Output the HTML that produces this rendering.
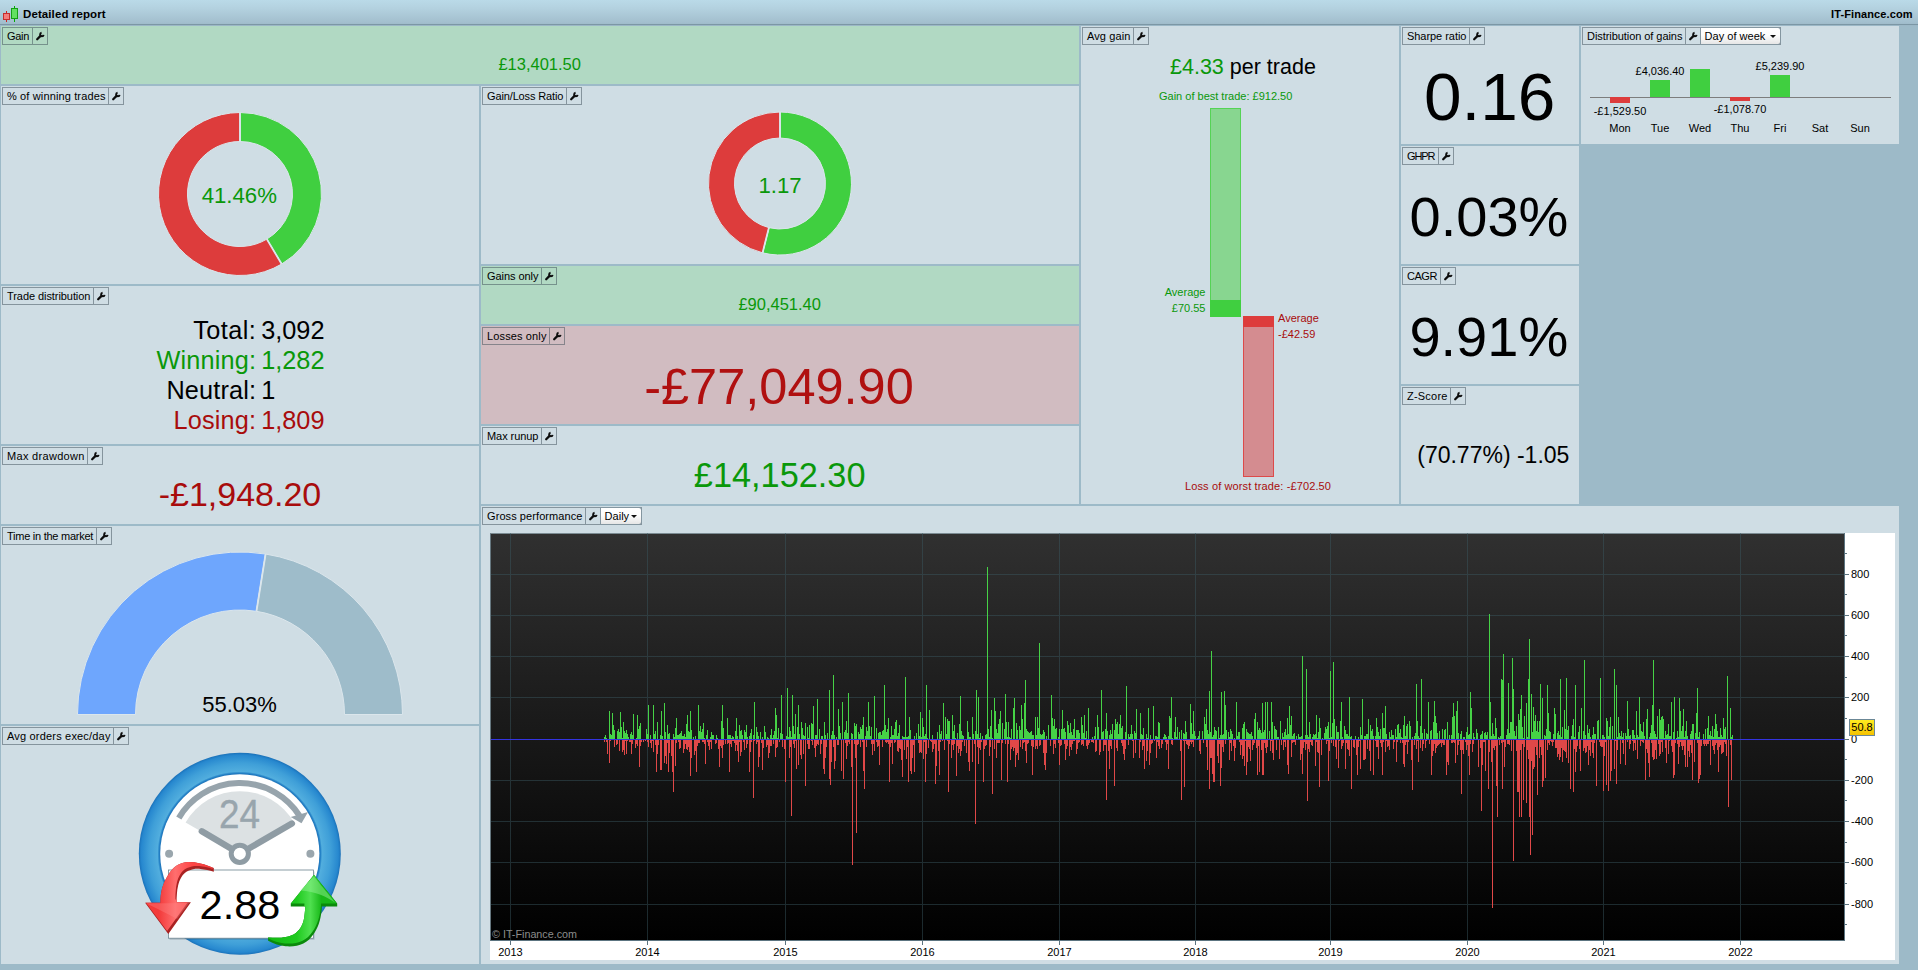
<!DOCTYPE html>
<html lang="en"><head><meta charset="utf-8"><title>Detailed report</title>
<style>
html,body{margin:0;padding:0}
body{width:1918px;height:970px;overflow:hidden;background:#9dbac8;font-family:"Liberation Sans",Arial,sans-serif;font-size:11px;color:#000;position:relative;line-height:1}
.p{position:absolute;overflow:hidden}
.t{position:absolute;white-space:nowrap;line-height:1}
.c{transform:translateX(-50%)}
.r{transform:translateX(-100%)}
.lb{position:absolute;height:16px;border:1px solid rgba(60,75,85,.5);display:flex;white-space:nowrap;font-size:11px;line-height:16px}
.lt{display:block;padding-left:4px;box-sizing:border-box;height:16px}
.lw{display:block;width:14px;height:16px;border-left:1px solid rgba(60,75,85,.5);position:relative}
.wr{position:absolute;left:3.2px;top:3.8px}
.dd{display:block;height:18px;margin:-1px -1px -1px 0;box-sizing:border-box;border:1px solid #8496a0;border-radius:0 3px 3px 0;background:linear-gradient(#ffffff,#fdfdfd 45%,#e6e6e6);padding-left:3.6px;line-height:16px;position:relative}
.dd i{position:absolute;right:4px;top:7px;border:3px solid transparent;border-top:3px solid #111;border-bottom:0;width:0;height:0}
svg{position:absolute;overflow:visible}
</style></head><body>

<div class="p" style="left:0;top:0;width:1918px;height:26px;background:linear-gradient(#badae8 0,#b4d2e0 30%,#a3bfce 85%,#9fbbca 24px,#7c97a5 24px,#7c97a5 25px,#9bb7c6 25px)"></div>
<svg style="left:3px;top:5px" width="16" height="18" viewBox="0 0 16 18"><path d="M3.5 6v11M11.5 1v16" stroke="#c22" stroke-width="1" fill="none"/><path d="M11.5 1v16" stroke="#0a0" stroke-width="1" fill="none"/><rect x="0.5" y="8.5" width="6" height="6" fill="#f47c7c" stroke="#c62c2c"/><rect x="8.5" y="3.5" width="6" height="10" fill="#62e062" stroke="#14a014"/></svg>
<div class="t" style="left:23px;top:9px;font-weight:bold;font-size:11.5px;letter-spacing:.1px">Detailed report</div>
<div class="t" style="left:1831px;top:9px;font-weight:bold;font-size:11px;letter-spacing:.12px">IT-Finance.com</div>
<div class="p" style="left:1px;top:26px;width:1078px;height:58px;background:#b1d9c3"></div>
<div class="p" style="left:1px;top:86px;width:478px;height:198px;background:#cfdde4"></div>
<div class="p" style="left:1px;top:286px;width:478px;height:158px;background:#cfdde4"></div>
<div class="p" style="left:1px;top:446px;width:478px;height:78px;background:#cfdde4"></div>
<div class="p" style="left:1px;top:526px;width:478px;height:198px;background:#cfdde4"></div>
<div class="p" style="left:1px;top:726px;width:478px;height:238px;background:#cfdde4"></div>
<div class="p" style="left:481px;top:86px;width:598px;height:178px;background:#cfdde4"></div>
<div class="p" style="left:481px;top:266px;width:598px;height:58px;background:#b1d9c3"></div>
<div class="p" style="left:481px;top:326px;width:598px;height:98px;background:#d1bcc1"></div>
<div class="p" style="left:481px;top:426px;width:598px;height:78px;background:#cfdde4"></div>
<div class="p" style="left:1081px;top:26px;width:318px;height:478px;background:#cfdde4"></div>
<div class="p" style="left:1401px;top:26px;width:178px;height:118px;background:#cfdde4"></div>
<div class="p" style="left:1401px;top:146px;width:178px;height:118px;background:#cfdde4"></div>
<div class="p" style="left:1401px;top:266px;width:178px;height:118px;background:#cfdde4"></div>
<div class="p" style="left:1401px;top:386px;width:178px;height:118px;background:#cfdde4"></div>
<div class="p" style="left:1581px;top:26px;width:318px;height:118px;background:#cfdde4"></div>
<div class="p" style="left:481px;top:506px;width:1418px;height:458px;background:#cfdde4"></div>
<div class="lb" style="left:2px;top:27px"><span class="lt" style="width:29px;letter-spacing:-0.278px">Gain</span><span class="lw"><svg class="wr" viewBox="0 0 10 10" width="8.4" height="8.4"><path d="M1.4 8.6L5.4 4.6" stroke="#0c0c0c" stroke-width="2.7" stroke-linecap="round" fill="none"/><path d="M9.07 3.36A2.1 2.1 0 1 1 6.64 0.93" stroke="#0c0c0c" stroke-width="2.3" fill="none"/></svg></span></div>
<div class="lb" style="left:2px;top:87px"><span class="lt" style="width:105px;letter-spacing:0.134px">% of winning trades</span><span class="lw"><svg class="wr" viewBox="0 0 10 10" width="8.4" height="8.4"><path d="M1.4 8.6L5.4 4.6" stroke="#0c0c0c" stroke-width="2.7" stroke-linecap="round" fill="none"/><path d="M9.07 3.36A2.1 2.1 0 1 1 6.64 0.93" stroke="#0c0c0c" stroke-width="2.3" fill="none"/></svg></span></div>
<div class="lb" style="left:2px;top:287px"><span class="lt" style="width:90px;letter-spacing:-0.069px">Trade distribution</span><span class="lw"><svg class="wr" viewBox="0 0 10 10" width="8.4" height="8.4"><path d="M1.4 8.6L5.4 4.6" stroke="#0c0c0c" stroke-width="2.7" stroke-linecap="round" fill="none"/><path d="M9.07 3.36A2.1 2.1 0 1 1 6.64 0.93" stroke="#0c0c0c" stroke-width="2.3" fill="none"/></svg></span></div>
<div class="lb" style="left:2px;top:447px"><span class="lt" style="width:84px;letter-spacing:0.312px">Max drawdown</span><span class="lw"><svg class="wr" viewBox="0 0 10 10" width="8.4" height="8.4"><path d="M1.4 8.6L5.4 4.6" stroke="#0c0c0c" stroke-width="2.7" stroke-linecap="round" fill="none"/><path d="M9.07 3.36A2.1 2.1 0 1 1 6.64 0.93" stroke="#0c0c0c" stroke-width="2.3" fill="none"/></svg></span></div>
<div class="lb" style="left:2px;top:527px"><span class="lt" style="width:93px;letter-spacing:-0.251px">Time in the market</span><span class="lw"><svg class="wr" viewBox="0 0 10 10" width="8.4" height="8.4"><path d="M1.4 8.6L5.4 4.6" stroke="#0c0c0c" stroke-width="2.7" stroke-linecap="round" fill="none"/><path d="M9.07 3.36A2.1 2.1 0 1 1 6.64 0.93" stroke="#0c0c0c" stroke-width="2.3" fill="none"/></svg></span></div>
<div class="lb" style="left:2px;top:727px"><span class="lt" style="width:110px;letter-spacing:0.185px">Avg orders exec/day</span><span class="lw"><svg class="wr" viewBox="0 0 10 10" width="8.4" height="8.4"><path d="M1.4 8.6L5.4 4.6" stroke="#0c0c0c" stroke-width="2.7" stroke-linecap="round" fill="none"/><path d="M9.07 3.36A2.1 2.1 0 1 1 6.64 0.93" stroke="#0c0c0c" stroke-width="2.3" fill="none"/></svg></span></div>
<div class="lb" style="left:482px;top:87px"><span class="lt" style="width:83px;letter-spacing:-0.133px">Gain/Loss Ratio</span><span class="lw"><svg class="wr" viewBox="0 0 10 10" width="8.4" height="8.4"><path d="M1.4 8.6L5.4 4.6" stroke="#0c0c0c" stroke-width="2.7" stroke-linecap="round" fill="none"/><path d="M9.07 3.36A2.1 2.1 0 1 1 6.64 0.93" stroke="#0c0c0c" stroke-width="2.3" fill="none"/></svg></span></div>
<div class="lb" style="left:482px;top:267px"><span class="lt" style="width:58px;letter-spacing:-0.063px">Gains only</span><span class="lw"><svg class="wr" viewBox="0 0 10 10" width="8.4" height="8.4"><path d="M1.4 8.6L5.4 4.6" stroke="#0c0c0c" stroke-width="2.7" stroke-linecap="round" fill="none"/><path d="M9.07 3.36A2.1 2.1 0 1 1 6.64 0.93" stroke="#0c0c0c" stroke-width="2.3" fill="none"/></svg></span></div>
<div class="lb" style="left:482px;top:327px"><span class="lt" style="width:66px;letter-spacing:0.131px">Losses only</span><span class="lw"><svg class="wr" viewBox="0 0 10 10" width="8.4" height="8.4"><path d="M1.4 8.6L5.4 4.6" stroke="#0c0c0c" stroke-width="2.7" stroke-linecap="round" fill="none"/><path d="M9.07 3.36A2.1 2.1 0 1 1 6.64 0.93" stroke="#0c0c0c" stroke-width="2.3" fill="none"/></svg></span></div>
<div class="lb" style="left:482px;top:427px"><span class="lt" style="width:58px;letter-spacing:-0.071px">Max runup</span><span class="lw"><svg class="wr" viewBox="0 0 10 10" width="8.4" height="8.4"><path d="M1.4 8.6L5.4 4.6" stroke="#0c0c0c" stroke-width="2.7" stroke-linecap="round" fill="none"/><path d="M9.07 3.36A2.1 2.1 0 1 1 6.64 0.93" stroke="#0c0c0c" stroke-width="2.3" fill="none"/></svg></span></div>
<div class="lb" style="left:1082px;top:27px"><span class="lt" style="width:50px;letter-spacing:0.113px">Avg gain</span><span class="lw"><svg class="wr" viewBox="0 0 10 10" width="8.4" height="8.4"><path d="M1.4 8.6L5.4 4.6" stroke="#0c0c0c" stroke-width="2.7" stroke-linecap="round" fill="none"/><path d="M9.07 3.36A2.1 2.1 0 1 1 6.64 0.93" stroke="#0c0c0c" stroke-width="2.3" fill="none"/></svg></span></div>
<div class="lb" style="left:1402px;top:27px"><span class="lt" style="width:66px;letter-spacing:-0.047px">Sharpe ratio</span><span class="lw"><svg class="wr" viewBox="0 0 10 10" width="8.4" height="8.4"><path d="M1.4 8.6L5.4 4.6" stroke="#0c0c0c" stroke-width="2.7" stroke-linecap="round" fill="none"/><path d="M9.07 3.36A2.1 2.1 0 1 1 6.64 0.93" stroke="#0c0c0c" stroke-width="2.3" fill="none"/></svg></span></div>
<div class="lb" style="left:1402px;top:147px"><span class="lt" style="width:35px;letter-spacing:-1.127px">GHPR</span><span class="lw"><svg class="wr" viewBox="0 0 10 10" width="8.4" height="8.4"><path d="M1.4 8.6L5.4 4.6" stroke="#0c0c0c" stroke-width="2.7" stroke-linecap="round" fill="none"/><path d="M9.07 3.36A2.1 2.1 0 1 1 6.64 0.93" stroke="#0c0c0c" stroke-width="2.3" fill="none"/></svg></span></div>
<div class="lb" style="left:1402px;top:267px"><span class="lt" style="width:37px;letter-spacing:-0.460px">CAGR</span><span class="lw"><svg class="wr" viewBox="0 0 10 10" width="8.4" height="8.4"><path d="M1.4 8.6L5.4 4.6" stroke="#0c0c0c" stroke-width="2.7" stroke-linecap="round" fill="none"/><path d="M9.07 3.36A2.1 2.1 0 1 1 6.64 0.93" stroke="#0c0c0c" stroke-width="2.3" fill="none"/></svg></span></div>
<div class="lb" style="left:1402px;top:387px"><span class="lt" style="width:47px;letter-spacing:0.214px">Z-Score</span><span class="lw"><svg class="wr" viewBox="0 0 10 10" width="8.4" height="8.4"><path d="M1.4 8.6L5.4 4.6" stroke="#0c0c0c" stroke-width="2.7" stroke-linecap="round" fill="none"/><path d="M9.07 3.36A2.1 2.1 0 1 1 6.64 0.93" stroke="#0c0c0c" stroke-width="2.3" fill="none"/></svg></span></div>
<div class="lb" style="left:1582px;top:27px"><span class="lt" style="width:102px;letter-spacing:-0.060px">Distribution of gains</span><span class="lw"><svg class="wr" viewBox="0 0 10 10" width="8.4" height="8.4"><path d="M1.4 8.6L5.4 4.6" stroke="#0c0c0c" stroke-width="2.7" stroke-linecap="round" fill="none"/><path d="M9.07 3.36A2.1 2.1 0 1 1 6.64 0.93" stroke="#0c0c0c" stroke-width="2.3" fill="none"/></svg></span><span class="dd" style="width:81px;letter-spacing:0.020px">Day of week<i></i></span></div>
<div class="lb" style="left:482px;top:507px"><span class="lt" style="width:102px;letter-spacing:0.079px">Gross performance</span><span class="lw"><svg class="wr" viewBox="0 0 10 10" width="8.4" height="8.4"><path d="M1.4 8.6L5.4 4.6" stroke="#0c0c0c" stroke-width="2.7" stroke-linecap="round" fill="none"/><path d="M9.07 3.36A2.1 2.1 0 1 1 6.64 0.93" stroke="#0c0c0c" stroke-width="2.3" fill="none"/></svg></span><span class="dd" style="width:42px;letter-spacing:0.020px">Daily<i></i></span></div>

<svg style="left:0;top:0" width="1918" height="970"><g stroke="#dbe6ec" stroke-width="1">
<path d="M240.00 112.50A81.5 81.5 0 0 1 281.66 264.05L266.84 239.12A52.5 52.5 0 0 0 240.00 141.50Z" fill="#40cf40"/><path d="M281.66 264.05A81.5 81.5 0 1 1 240.00 112.50L240.00 141.50A52.5 52.5 0 1 0 266.84 239.12Z" fill="#dd3c3c"/>
<path d="M240.00 141.50L240.00 112.50M266.84 239.12L281.66 264.05" stroke-width="1.8" fill="none"/>
<path d="M780.00 112.00A71.5 71.5 0 1 1 762.58 252.85L768.91 227.63A45.5 45.5 0 1 0 780.00 138.00Z" fill="#40cf40"/><path d="M762.58 252.85A71.5 71.5 0 0 1 780.00 112.00L780.00 138.00A45.5 45.5 0 0 0 768.91 227.63Z" fill="#dd3c3c"/>
<path d="M780.00 138.00L780.00 112.00M768.91 227.63L762.58 252.85" stroke-width="1.8" fill="none"/>
<path d="M77.50 714.50A162.5 162.5 0 0 1 265.57 554.02L256.44 611.30A104.5 104.5 0 0 0 135.50 714.50Z" fill="#6ea6fd"/><path d="M265.57 554.02A162.5 162.5 0 0 1 402.50 714.50L344.50 714.50A104.5 104.5 0 0 0 256.44 611.30Z" fill="#9ebcca"/>
<path d="M256.44 611.30L265.57 554.02" stroke-width="1.8" fill="none"/>
</g></svg>
















<div class="p" style="left:1210px;top:108px;width:31px;height:209px;box-sizing:border-box;border:1px solid #55d355;background:#88d690"></div>
<div class="p" style="left:1210px;top:300px;width:31px;height:17px;background:#40cf40"></div>
<div class="p" style="left:1243px;top:316px;width:31px;height:161px;box-sizing:border-box;border:1px solid #dd4a4a;background:#d48c90"></div>
<div class="p" style="left:1243px;top:316px;width:31px;height:11px;background:#dd3c3c"></div>









<div class="p" style="left:1590px;top:97px;width:301px;height:1px;background:#7d7d7d"></div>
<div class="p" style="left:1610px;top:97px;width:20px;height:6px;background:#dd3c3c"></div>
<div class="p" style="left:1650px;top:80px;width:20px;height:17px;background:#40cf40"></div>
<div class="p" style="left:1690px;top:69px;width:20px;height:28px;background:#40cf40"></div>
<div class="p" style="left:1730px;top:97px;width:20px;height:4px;background:#dd3c3c"></div>
<div class="p" style="left:1770px;top:75px;width:20px;height:22px;background:#40cf40"></div>











<div class="p" style="left:490px;top:533px;width:1405px;height:427px;background:#fff"></div>
<div class="p" style="left:490px;top:533px;width:1355px;height:408px;background:linear-gradient(#303030,#000);box-sizing:border-box;border-top:1px solid #7b8b92;border-left:1px solid #66777f"></div>
<svg style="left:0;top:0" width="1918" height="970" shape-rendering="crispEdges"><path d="M510.5 533V941M647.5 533V941M785.5 533V941M922.5 533V941M1059.5 533V941M1195.5 533V941M1330.5 533V941M1467.5 533V941M1603.5 533V941M1740.5 533V941M491 904.5H1845M491 862.5H1845M491 821.5H1845M491 780.5H1845M491 697.5H1845M491 656.5H1845M491 615.5H1845M491 574.5H1845" stroke="#3a5962" stroke-opacity=".46" stroke-width="1" fill="none"/><path d="M604.5 739v-2M605.5 739v-4M606.5 739v-1M609.5 739v-28M610.5 739v-5M611.5 739v-4M612.5 739v-26M613.5 739v-14M614.5 739v-9M617.5 739v-8M618.5 739v-10M619.5 739v-7M620.5 739v-27M621.5 739v-12M622.5 739v-1M623.5 739v-17M624.5 739v-8M625.5 739v-6M626.5 739v-9M627.5 739v-5M628.5 739v-2M630.5 739v-5M631.5 739v-7M632.5 739v-4M633.5 739v-25M636.5 739v-1M637.5 739v-24M638.5 739v-10M639.5 739v-13M640.5 739v-16M646.5 739v-10M647.5 739v-5M648.5 739v-34M650.5 739v-4M653.5 739v-34M654.5 739v-5M655.5 739v-8M657.5 739v-17M660.5 739v-4M661.5 739v-28M662.5 739v-3M664.5 739v-36M665.5 739v-7M667.5 739v-14M668.5 739v-5M669.5 739v-6M673.5 739v-5M674.5 739v-2M675.5 739v-11M676.5 739v-21M677.5 739v-4M678.5 739v-4M679.5 739v-5M680.5 739v-6M681.5 739v-8M682.5 739v-3M683.5 739v-3M684.5 739v-5M685.5 739v-2M686.5 739v-15M687.5 739v-24M688.5 739v-8M689.5 739v-7M690.5 739v-28M691.5 739v-9M693.5 739v-2M695.5 739v-3M698.5 739v-34M699.5 739v-8M700.5 739v-13M701.5 739v-7M702.5 739v-10M703.5 739v-16M704.5 739v-1M706.5 739v-4M707.5 739v-9M710.5 739v-2M711.5 739v-7M712.5 739v-4M713.5 739v-4M716.5 739v-4M717.5 739v-1M721.5 739v-18M722.5 739v-34M723.5 739v-11M727.5 739v-21M728.5 739v-4M729.5 739v-4M730.5 739v-4M731.5 739v-1M732.5 739v-3M733.5 739v-2M735.5 739v-8M736.5 739v-21M737.5 739v-3M739.5 739v-14M740.5 739v-8M741.5 739v-9M742.5 739v-4M744.5 739v-9M745.5 739v-7M746.5 739v-14M747.5 739v-2M749.5 739v-3M750.5 739v-6M751.5 739v-10M753.5 739v-4M754.5 739v-37M756.5 739v-12M757.5 739v-7M758.5 739v-3M760.5 739v-7M762.5 739v-2M764.5 739v-13M765.5 739v-7M767.5 739v-2M768.5 739v-1M770.5 739v-4M771.5 739v-10M772.5 739v-1M773.5 739v-4M774.5 739v-8M775.5 739v-31M776.5 739v-24M777.5 739v-1M778.5 739v-11M780.5 739v-6M781.5 739v-44M782.5 739v-5M786.5 739v-3M787.5 739v-51M788.5 739v-2M789.5 739v-12M790.5 739v-8M791.5 739v-2M792.5 739v-44M793.5 739v-13M794.5 739v-5M795.5 739v-25M797.5 739v-12M798.5 739v-34M799.5 739v-5M801.5 739v-17M802.5 739v-11M803.5 739v-4M804.5 739v-3M805.5 739v-16M807.5 739v-12M808.5 739v-1M809.5 739v-14M811.5 739v-16M812.5 739v-15M813.5 739v-33M815.5 739v-4M816.5 739v-4M817.5 739v-40M819.5 739v-10M821.5 739v-3M822.5 739v-3M824.5 739v-17M825.5 739v-4M827.5 739v-6M829.5 739v-49M831.5 739v-4M832.5 739v-8M833.5 739v-64M834.5 739v-4M836.5 739v-2M838.5 739v-30M839.5 739v-13M840.5 739v-6M842.5 739v-37M844.5 739v-7M845.5 739v-9M846.5 739v-18M847.5 739v-6M848.5 739v-46M851.5 739v-6M852.5 739v-5M854.5 739v-16M855.5 739v-13M856.5 739v-15M858.5 739v-7M859.5 739v-5M860.5 739v-12M861.5 739v-10M862.5 739v-14M863.5 739v-22M865.5 739v-3M866.5 739v-12M867.5 739v-8M868.5 739v-37M869.5 739v-13M870.5 739v-3M871.5 739v-12M874.5 739v-43M876.5 739v-11M878.5 739v-6M879.5 739v-7M880.5 739v-7M881.5 739v-4M882.5 739v-8M883.5 739v-9M884.5 739v-54M885.5 739v-14M886.5 739v-7M887.5 739v-10M888.5 739v-21M890.5 739v-2M891.5 739v-13M892.5 739v-4M893.5 739v-4M894.5 739v-10M895.5 739v-17M896.5 739v-19M897.5 739v-3M898.5 739v-6M899.5 739v-14M902.5 739v-3M903.5 739v-2M904.5 739v-2M905.5 739v-62M906.5 739v-2M907.5 739v-2M908.5 739v-3M909.5 739v-22M910.5 739v-9M914.5 739v-3M916.5 739v-6M918.5 739v-15M919.5 739v-3M920.5 739v-27M921.5 739v-2M922.5 739v-21M923.5 739v-12M924.5 739v-3M925.5 739v-5M926.5 739v-54M927.5 739v-1M929.5 739v-29M932.5 739v-4M937.5 739v-7M939.5 739v-14M940.5 739v-5M941.5 739v-8M943.5 739v-36M945.5 739v-22M946.5 739v-5M947.5 739v-20M948.5 739v-18M949.5 739v-18M952.5 739v-24M953.5 739v-8M954.5 739v-14M955.5 739v-1M957.5 739v-6M959.5 739v-15M960.5 739v-43M961.5 739v-8M962.5 739v-4M963.5 739v-3M967.5 739v-18M968.5 739v-7M969.5 739v-2M970.5 739v-2M972.5 739v-22M973.5 739v-5M975.5 739v-8M976.5 739v-49M977.5 739v-5M978.5 739v-42M979.5 739v-1M980.5 739v-6M982.5 739v-3M985.5 739v-4M986.5 739v-5M987.5 739v-172M988.5 739v-10M989.5 739v-2M990.5 739v-13M991.5 739v-29M992.5 739v-1M994.5 739v-41M995.5 739v-28M996.5 739v-10M997.5 739v-6M998.5 739v-15M999.5 739v-20M1000.5 739v-28M1002.5 739v-16M1004.5 739v-10M1005.5 739v-45M1006.5 739v-17M1007.5 739v-2M1008.5 739v-17M1009.5 739v-2M1010.5 739v-1M1011.5 739v-10M1013.5 739v-31M1014.5 739v-41M1016.5 739v-16M1017.5 739v-9M1019.5 739v-13M1020.5 739v-9M1021.5 739v-34M1022.5 739v-20M1023.5 739v-1M1024.5 739v-36M1025.5 739v-59M1026.5 739v-10M1027.5 739v-8M1028.5 739v-7M1029.5 739v-6M1030.5 739v-7M1031.5 739v-8M1032.5 739v-4M1033.5 739v-4M1035.5 739v-22M1036.5 739v-4M1037.5 739v-22M1038.5 739v-11M1039.5 739v-96M1040.5 739v-5M1041.5 739v-4M1042.5 739v-5M1043.5 739v-9M1044.5 739v-7M1046.5 739v-3M1048.5 739v-14M1051.5 739v-44M1052.5 739v-21M1053.5 739v-13M1054.5 739v-20M1055.5 739v-10M1056.5 739v-11M1058.5 739v-2M1059.5 739v-10M1061.5 739v-10M1062.5 739v-29M1063.5 739v-10M1064.5 739v-11M1065.5 739v-7M1067.5 739v-18M1068.5 739v-14M1069.5 739v-6M1070.5 739v-16M1071.5 739v-7M1072.5 739v-4M1073.5 739v-10M1074.5 739v-20M1075.5 739v-1M1076.5 739v-9M1077.5 739v-9M1078.5 739v-9M1079.5 739v-6M1081.5 739v-22M1082.5 739v-14M1083.5 739v-6M1084.5 739v-24M1085.5 739v-1M1086.5 739v-8M1088.5 739v-31M1092.5 739v-2M1094.5 739v-3M1095.5 739v-12M1097.5 739v-24M1098.5 739v-12M1101.5 739v-49M1102.5 739v-7M1103.5 739v-8M1105.5 739v-10M1106.5 739v-26M1107.5 739v-8M1109.5 739v-4M1110.5 739v-9M1111.5 739v-5M1112.5 739v-15M1114.5 739v-9M1115.5 739v-20M1116.5 739v-15M1117.5 739v-17M1118.5 739v-5M1119.5 739v-15M1120.5 739v-24M1121.5 739v-11M1122.5 739v-13M1125.5 739v-7M1126.5 739v-53M1128.5 739v-5M1129.5 739v-2M1130.5 739v-5M1131.5 739v-14M1132.5 739v-5M1134.5 739v-8M1135.5 739v-6M1136.5 739v-30M1140.5 739v-26M1141.5 739v-5M1142.5 739v-4M1143.5 739v-11M1146.5 739v-5M1147.5 739v-1M1148.5 739v-31M1150.5 739v-4M1153.5 739v-33M1155.5 739v-3M1156.5 739v-3M1157.5 739v-2M1158.5 739v-17M1159.5 739v-16M1163.5 739v-2M1164.5 739v-5M1165.5 739v-4M1166.5 739v-2M1168.5 739v-3M1169.5 739v-23M1170.5 739v-21M1171.5 739v-42M1172.5 739v-1M1174.5 739v-7M1175.5 739v-22M1176.5 739v-2M1177.5 739v-12M1179.5 739v-7M1181.5 739v-9M1183.5 739v-6M1184.5 739v-5M1185.5 739v-18M1186.5 739v-7M1190.5 739v-35M1191.5 739v-16M1192.5 739v-5M1193.5 739v-28M1194.5 739v-8M1195.5 739v-3M1197.5 739v-1M1198.5 739v-3M1199.5 739v-8M1202.5 739v-8M1204.5 739v-22M1205.5 739v-15M1206.5 739v-30M1207.5 739v-9M1208.5 739v-5M1209.5 739v-48M1210.5 739v-7M1211.5 739v-88M1212.5 739v-2M1213.5 739v-4M1214.5 739v-12M1215.5 739v-9M1216.5 739v-8M1218.5 739v-12M1219.5 739v-1M1220.5 739v-4M1221.5 739v-47M1222.5 739v-4M1223.5 739v-5M1224.5 739v-48M1225.5 739v-34M1226.5 739v-9M1228.5 739v-7M1229.5 739v-2M1230.5 739v-10M1231.5 739v-8M1232.5 739v-5M1234.5 739v-1M1236.5 739v-37M1237.5 739v-3M1238.5 739v-7M1239.5 739v-7M1242.5 739v-11M1243.5 739v-15M1244.5 739v-17M1246.5 739v-10M1247.5 739v-7M1248.5 739v-6M1249.5 739v-5M1250.5 739v-5M1251.5 739v-7M1252.5 739v-3M1254.5 739v-20M1255.5 739v-26M1257.5 739v-17M1258.5 739v-9M1259.5 739v-11M1260.5 739v-9M1261.5 739v-6M1262.5 739v-36M1263.5 739v-7M1264.5 739v-9M1265.5 739v-37M1267.5 739v-37M1269.5 739v-8M1271.5 739v-37M1272.5 739v-17M1274.5 739v-13M1275.5 739v-10M1276.5 739v-9M1277.5 739v-2M1278.5 739v-2M1280.5 739v-18M1282.5 739v-6M1283.5 739v-2M1284.5 739v-7M1285.5 739v-10M1286.5 739v-4M1287.5 739v-21M1288.5 739v-5M1289.5 739v-33M1290.5 739v-14M1291.5 739v-23M1292.5 739v-3M1293.5 739v-5M1294.5 739v-6M1296.5 739v-3M1298.5 739v-5M1299.5 739v-2M1300.5 739v-2M1301.5 739v-3M1302.5 739v-83M1305.5 739v-4M1306.5 739v-70M1307.5 739v-4M1308.5 739v-2M1309.5 739v-17M1310.5 739v-5M1312.5 739v-2M1313.5 739v-5M1314.5 739v-4M1315.5 739v-5M1316.5 739v-24M1317.5 739v-1M1318.5 739v-7M1319.5 739v-21M1320.5 739v-11M1322.5 739v-1M1324.5 739v-6M1325.5 739v-12M1326.5 739v-10M1327.5 739v-13M1328.5 739v-17M1329.5 739v-1M1330.5 739v-68M1331.5 739v-2M1332.5 739v-16M1333.5 739v-77M1334.5 739v-20M1336.5 739v-13M1337.5 739v-7M1338.5 739v-7M1340.5 739v-18M1341.5 739v-37M1342.5 739v-2M1344.5 739v-13M1345.5 739v-9M1346.5 739v-5M1347.5 739v-5M1348.5 739v-3M1349.5 739v-42M1350.5 739v-2M1351.5 739v-3M1355.5 739v-3M1358.5 739v-2M1360.5 739v-12M1361.5 739v-4M1362.5 739v-40M1364.5 739v-3M1365.5 739v-3M1366.5 739v-5M1367.5 739v-5M1368.5 739v-20M1370.5 739v-14M1371.5 739v-8M1372.5 739v-10M1373.5 739v-3M1375.5 739v-3M1376.5 739v-21M1377.5 739v-12M1378.5 739v-7M1379.5 739v-3M1380.5 739v-10M1382.5 739v-26M1383.5 739v-11M1384.5 739v-11M1385.5 739v-33M1386.5 739v-5M1389.5 739v-7M1390.5 739v-2M1391.5 739v-9M1392.5 739v-4M1393.5 739v-4M1395.5 739v-10M1396.5 739v-2M1397.5 739v-14M1398.5 739v-15M1399.5 739v-6M1400.5 739v-10M1401.5 739v-2M1402.5 739v-1M1403.5 739v-14M1404.5 739v-23M1405.5 739v-3M1406.5 739v-13M1407.5 739v-15M1409.5 739v-18M1410.5 739v-13M1412.5 739v-2M1414.5 739v-3M1415.5 739v-6M1416.5 739v-55M1417.5 739v-18M1418.5 739v-3M1419.5 739v-1M1420.5 739v-13M1421.5 739v-60M1422.5 739v-6M1424.5 739v-10M1426.5 739v-6M1427.5 739v-5M1428.5 739v-37M1430.5 739v-8M1431.5 739v-9M1433.5 739v-17M1434.5 739v-38M1435.5 739v-23M1436.5 739v-16M1437.5 739v-6M1439.5 739v-8M1442.5 739v-10M1444.5 739v-9M1445.5 739v-10M1447.5 739v-17M1449.5 739v-4M1451.5 739v-4M1452.5 739v-22M1453.5 739v-36M1454.5 739v-23M1456.5 739v-28M1457.5 739v-38M1458.5 739v-6M1460.5 739v-5M1461.5 739v-8M1463.5 739v-2M1464.5 739v-2M1466.5 739v-7M1467.5 739v-12M1468.5 739v-4M1469.5 739v-5M1470.5 739v-47M1471.5 739v-31M1473.5 739v-6M1474.5 739v-2M1476.5 739v-10M1477.5 739v-6M1480.5 739v-4M1481.5 739v-5M1482.5 739v-8M1484.5 739v-6M1485.5 739v-7M1486.5 739v-4M1487.5 739v-7M1489.5 739v-125M1490.5 739v-37M1491.5 739v-3M1492.5 739v-16M1493.5 739v-5M1494.5 739v-3M1495.5 739v-21M1496.5 739v-11M1498.5 739v-2M1499.5 739v-1M1500.5 739v-3M1501.5 739v-60M1502.5 739v-59M1503.5 739v-85M1506.5 739v-4M1507.5 739v-10M1508.5 739v-56M1509.5 739v-6M1510.5 739v-17M1511.5 739v-17M1512.5 739v-81M1513.5 739v-50M1514.5 739v-8M1515.5 739v-3M1516.5 739v-13M1518.5 739v-25M1519.5 739v-19M1520.5 739v-30M1521.5 739v-44M1522.5 739v-12M1523.5 739v-1M1524.5 739v-23M1526.5 739v-36M1527.5 739v-2M1528.5 739v-60M1529.5 739v-100M1531.5 739v-45M1532.5 739v-7M1533.5 739v-32M1534.5 739v-18M1535.5 739v-24M1536.5 739v-8M1537.5 739v-18M1538.5 739v-7M1539.5 739v-18M1540.5 739v-55M1542.5 739v-41M1544.5 739v-4M1545.5 739v-3M1546.5 739v-10M1547.5 739v-54M1548.5 739v-26M1549.5 739v-8M1550.5 739v-7M1553.5 739v-5M1554.5 739v-31M1555.5 739v-25M1557.5 739v-6M1558.5 739v-8M1559.5 739v-4M1560.5 739v-60M1561.5 739v-2M1562.5 739v-12M1564.5 739v-29M1565.5 739v-10M1566.5 739v-61M1567.5 739v-9M1568.5 739v-13M1571.5 739v-3M1572.5 739v-14M1573.5 739v-20M1574.5 739v-2M1575.5 739v-54M1578.5 739v-7M1579.5 739v-13M1581.5 739v-31M1583.5 739v-8M1584.5 739v-79M1585.5 739v-4M1587.5 739v-14M1588.5 739v-6M1589.5 739v-10M1590.5 739v-2M1592.5 739v-4M1593.5 739v-12M1594.5 739v-5M1595.5 739v-5M1597.5 739v-18M1598.5 739v-19M1600.5 739v-61M1602.5 739v-4M1603.5 739v-4M1604.5 739v-2M1606.5 739v-21M1607.5 739v-18M1608.5 739v-3M1609.5 739v-12M1610.5 739v-22M1612.5 739v-13M1614.5 739v-70M1616.5 739v-54M1617.5 739v-2M1618.5 739v-22M1619.5 739v-6M1620.5 739v-3M1621.5 739v-8M1622.5 739v-2M1623.5 739v-6M1625.5 739v-6M1626.5 739v-3M1627.5 739v-38M1628.5 739v-10M1629.5 739v-3M1630.5 739v-4M1632.5 739v-9M1633.5 739v-9M1634.5 739v-4M1635.5 739v-1M1636.5 739v-28M1637.5 739v-4M1638.5 739v-2M1639.5 739v-42M1640.5 739v-15M1641.5 739v-8M1642.5 739v-7M1643.5 739v-17M1644.5 739v-3M1646.5 739v-20M1647.5 739v-30M1649.5 739v-2M1650.5 739v-6M1651.5 739v-14M1652.5 739v-34M1653.5 739v-79M1654.5 739v-8M1655.5 739v-5M1656.5 739v-2M1657.5 739v-23M1659.5 739v-30M1660.5 739v-19M1661.5 739v-22M1662.5 739v-23M1663.5 739v-20M1664.5 739v-1M1665.5 739v-8M1666.5 739v-4M1667.5 739v-5M1668.5 739v-15M1669.5 739v-3M1670.5 739v-3M1671.5 739v-37M1673.5 739v-7M1674.5 739v-42M1676.5 739v-1M1677.5 739v-8M1678.5 739v-2M1679.5 739v-41M1680.5 739v-28M1681.5 739v-8M1682.5 739v-13M1683.5 739v-30M1684.5 739v-2M1685.5 739v-8M1686.5 739v-18M1687.5 739v-3M1690.5 739v-5M1691.5 739v-8M1692.5 739v-15M1693.5 739v-15M1695.5 739v-6M1696.5 739v-26M1697.5 739v-51M1698.5 739v-2M1699.5 739v-7M1703.5 739v-5M1705.5 739v-10M1707.5 739v-11M1708.5 739v-23M1709.5 739v-4M1710.5 739v-8M1711.5 739v-3M1712.5 739v-13M1713.5 739v-2M1714.5 739v-10M1715.5 739v-25M1716.5 739v-15M1717.5 739v-8M1718.5 739v-2M1719.5 739v-2M1720.5 739v-11M1721.5 739v-4M1722.5 739v-2M1723.5 739v-21M1724.5 739v-10M1725.5 739v-12M1727.5 739v-63M1730.5 739v-31M1731.5 739v-2M1732.5 739v-4" stroke="#46d246" stroke-width="1" fill="none"/><path d="M604.5 740v2M606.5 740v2M607.5 740v14M609.5 740v23M610.5 740v1M614.5 740v7M616.5 740v5M617.5 740v4M619.5 740v11M622.5 740v12M623.5 740v10M624.5 740v15M625.5 740v1M626.5 740v14M627.5 740v1M629.5 740v2M630.5 740v2M631.5 740v14M632.5 740v4M635.5 740v8M636.5 740v4M637.5 740v6M639.5 740v27M640.5 740v6M641.5 740v2M643.5 740v2M645.5 740v1M647.5 740v2M648.5 740v7M650.5 740v3M651.5 740v8M652.5 740v1M653.5 740v12M655.5 740v5M656.5 740v32M657.5 740v14M658.5 740v5M660.5 740v30M661.5 740v30M664.5 740v23M665.5 740v16M666.5 740v24M667.5 740v3M668.5 740v32M669.5 740v13M671.5 740v16M672.5 740v32M673.5 740v52M675.5 740v26M676.5 740v3M678.5 740v2M679.5 740v9M680.5 740v8M683.5 740v13M684.5 740v9M685.5 740v4M686.5 740v9M687.5 740v10M688.5 740v7M689.5 740v12M690.5 740v36M691.5 740v18M694.5 740v15M695.5 740v11M696.5 740v32M697.5 740v6M698.5 740v3M699.5 740v3M702.5 740v2M703.5 740v2M704.5 740v4M705.5 740v24M707.5 740v2M708.5 740v6M709.5 740v10M710.5 740v2M711.5 740v9M715.5 740v4M716.5 740v3M718.5 740v9M719.5 740v27M720.5 740v6M721.5 740v8M722.5 740v18M723.5 740v5M725.5 740v4M727.5 740v4M728.5 740v3M729.5 740v32M730.5 740v4M731.5 740v7M732.5 740v1M733.5 740v1M734.5 740v3M735.5 740v11M736.5 740v5M737.5 740v11M738.5 740v22M739.5 740v2M740.5 740v16M741.5 740v12M743.5 740v2M744.5 740v10M746.5 740v8M747.5 740v4M749.5 740v32M750.5 740v12M751.5 740v2M753.5 740v58M754.5 740v1M756.5 740v4M757.5 740v2M758.5 740v27M759.5 740v17M761.5 740v3M762.5 740v30M763.5 740v8M766.5 740v7M767.5 740v5M768.5 740v18M769.5 740v13M770.5 740v6M771.5 740v6M773.5 740v4M775.5 740v17M776.5 740v8M777.5 740v7M779.5 740v2M782.5 740v7M784.5 740v9M785.5 740v42M789.5 740v18M790.5 740v7M791.5 740v76M793.5 740v4M794.5 740v8M795.5 740v1M796.5 740v29M798.5 740v25M800.5 740v15M801.5 740v19M803.5 740v14M805.5 740v46M807.5 740v4M808.5 740v9M809.5 740v9M811.5 740v1M812.5 740v5M814.5 740v8M815.5 740v17M816.5 740v6M817.5 740v4M818.5 740v5M820.5 740v14M821.5 740v4M823.5 740v29M824.5 740v34M825.5 740v18M826.5 740v7M829.5 740v39M830.5 740v45M831.5 740v22M833.5 740v7M834.5 740v29M835.5 740v21M837.5 740v5M838.5 740v5M841.5 740v31M843.5 740v39M845.5 740v3M846.5 740v19M847.5 740v6M848.5 740v2M849.5 740v4M851.5 740v27M852.5 740v125M854.5 740v4M855.5 740v18M856.5 740v93M857.5 740v5M858.5 740v4M860.5 740v7M862.5 740v2M863.5 740v31M864.5 740v49M866.5 740v7M871.5 740v4M872.5 740v15M873.5 740v4M874.5 740v11M876.5 740v2M877.5 740v7M878.5 740v6M879.5 740v25M882.5 740v7M885.5 740v2M886.5 740v3M887.5 740v2M888.5 740v4M889.5 740v42M890.5 740v7M891.5 740v3M892.5 740v24M894.5 740v3M895.5 740v2M897.5 740v11M898.5 740v12M899.5 740v8M900.5 740v9M901.5 740v20M902.5 740v37M904.5 740v10M906.5 740v19M907.5 740v7M908.5 740v42M910.5 740v31M911.5 740v34M912.5 740v18M913.5 740v5M914.5 740v32M918.5 740v3M919.5 740v13M920.5 740v12M921.5 740v13M923.5 740v19M924.5 740v2M925.5 740v42M926.5 740v14M928.5 740v8M930.5 740v1M931.5 740v2M932.5 740v12M933.5 740v9M934.5 740v4M935.5 740v44M936.5 740v26M938.5 740v11M939.5 740v35M940.5 740v2M942.5 740v1M944.5 740v10M947.5 740v1M948.5 740v52M949.5 740v4M951.5 740v18M952.5 740v5M953.5 740v10M954.5 740v4M956.5 740v36M957.5 740v6M958.5 740v13M959.5 740v9M960.5 740v16M961.5 740v11M962.5 740v2M964.5 740v6M966.5 740v13M968.5 740v22M969.5 740v31M972.5 740v22M974.5 740v4M975.5 740v84M977.5 740v7M978.5 740v24M979.5 740v8M980.5 740v10M981.5 740v2M983.5 740v42M984.5 740v9M985.5 740v6M986.5 740v5M989.5 740v16M990.5 740v7M992.5 740v54M994.5 740v9M996.5 740v18M997.5 740v3M998.5 740v3M999.5 740v3M1001.5 740v40M1002.5 740v3M1005.5 740v4M1007.5 740v42M1008.5 740v4M1010.5 740v20M1011.5 740v9M1012.5 740v7M1013.5 740v11M1014.5 740v8M1015.5 740v27M1016.5 740v15M1017.5 740v13M1018.5 740v20M1020.5 740v7M1022.5 740v9M1023.5 740v3M1024.5 740v2M1025.5 740v11M1026.5 740v23M1027.5 740v4M1028.5 740v3M1031.5 740v6M1032.5 740v35M1033.5 740v7M1035.5 740v9M1036.5 740v6M1037.5 740v9M1039.5 740v6M1040.5 740v5M1043.5 740v13M1044.5 740v25M1045.5 740v30M1046.5 740v13M1050.5 740v6M1053.5 740v14M1054.5 740v4M1055.5 740v8M1058.5 740v3M1059.5 740v25M1060.5 740v6M1061.5 740v5M1064.5 740v4M1065.5 740v20M1066.5 740v9M1067.5 740v6M1069.5 740v16M1070.5 740v7M1071.5 740v10M1072.5 740v4M1073.5 740v1M1074.5 740v1M1076.5 740v14M1077.5 740v9M1078.5 740v3M1079.5 740v2M1081.5 740v5M1082.5 740v4M1083.5 740v6M1086.5 740v6M1087.5 740v9M1088.5 740v5M1089.5 740v3M1091.5 740v2M1092.5 740v2M1093.5 740v3M1095.5 740v12M1096.5 740v11M1099.5 740v15M1100.5 740v12M1103.5 740v11M1104.5 740v5M1105.5 740v5M1106.5 740v60M1108.5 740v11M1109.5 740v29M1110.5 740v6M1111.5 740v9M1114.5 740v46M1116.5 740v8M1117.5 740v11M1121.5 740v3M1122.5 740v6M1123.5 740v14M1124.5 740v20M1125.5 740v9M1128.5 740v5M1132.5 740v1M1133.5 740v18M1135.5 740v13M1139.5 740v18M1140.5 740v2M1142.5 740v10M1143.5 740v6M1144.5 740v29M1146.5 740v21M1147.5 740v11M1149.5 740v25M1150.5 740v13M1151.5 740v4M1152.5 740v3M1154.5 740v1M1156.5 740v18M1157.5 740v2M1158.5 740v6M1159.5 740v9M1161.5 740v8M1162.5 740v4M1165.5 740v2M1166.5 740v10M1167.5 740v4M1168.5 740v29M1171.5 740v4M1172.5 740v5M1180.5 740v11M1181.5 740v60M1183.5 740v1M1184.5 740v47M1185.5 740v1M1186.5 740v4M1187.5 740v5M1188.5 740v9M1189.5 740v6M1190.5 740v2M1191.5 740v4M1192.5 740v2M1193.5 740v7M1199.5 740v11M1200.5 740v14M1203.5 740v3M1206.5 740v7M1207.5 740v30M1209.5 740v49M1210.5 740v18M1211.5 740v18M1212.5 740v34M1213.5 740v42M1214.5 740v42M1217.5 740v16M1218.5 740v23M1219.5 740v4M1220.5 740v46M1221.5 740v28M1222.5 740v7M1223.5 740v12M1225.5 740v4M1229.5 740v20M1230.5 740v3M1231.5 740v11M1233.5 740v6M1234.5 740v21M1235.5 740v8M1239.5 740v2M1240.5 740v15M1241.5 740v5M1242.5 740v19M1243.5 740v16M1244.5 740v26M1245.5 740v1M1246.5 740v35M1247.5 740v22M1248.5 740v7M1249.5 740v9M1250.5 740v21M1252.5 740v10M1253.5 740v5M1254.5 740v3M1256.5 740v8M1257.5 740v35M1258.5 740v6M1259.5 740v32M1261.5 740v10M1262.5 740v35M1263.5 740v35M1264.5 740v3M1265.5 740v8M1266.5 740v13M1267.5 740v7M1270.5 740v11M1271.5 740v1M1272.5 740v13M1273.5 740v20M1276.5 740v10M1279.5 740v19M1281.5 740v5M1283.5 740v10M1284.5 740v2M1285.5 740v7M1287.5 740v25M1288.5 740v34M1291.5 740v17M1292.5 740v3M1293.5 740v2M1294.5 740v2M1295.5 740v5M1300.5 740v20M1301.5 740v14M1302.5 740v34M1303.5 740v8M1304.5 740v2M1305.5 740v10M1306.5 740v4M1307.5 740v61M1308.5 740v9M1309.5 740v12M1310.5 740v2M1311.5 740v5M1312.5 740v6M1315.5 740v26M1316.5 740v2M1317.5 740v12M1318.5 740v13M1319.5 740v47M1321.5 740v15M1326.5 740v4M1327.5 740v1M1328.5 740v41M1329.5 740v11M1331.5 740v3M1333.5 740v6M1335.5 740v7M1336.5 740v19M1338.5 740v28M1339.5 740v1M1341.5 740v9M1342.5 740v6M1343.5 740v3M1345.5 740v29M1346.5 740v3M1347.5 740v9M1348.5 740v10M1349.5 740v16M1351.5 740v49M1353.5 740v7M1354.5 740v8M1356.5 740v15M1357.5 740v35M1358.5 740v7M1359.5 740v1M1360.5 740v29M1363.5 740v20M1364.5 740v20M1365.5 740v19M1367.5 740v9M1369.5 740v11M1370.5 740v31M1373.5 740v35M1375.5 740v1M1376.5 740v7M1377.5 740v7M1378.5 740v19M1380.5 740v3M1381.5 740v7M1382.5 740v35M1383.5 740v2M1385.5 740v12M1386.5 740v1M1387.5 740v7M1388.5 740v6M1389.5 740v10M1393.5 740v9M1394.5 740v2M1396.5 740v22M1397.5 740v2M1400.5 740v3M1402.5 740v3M1403.5 740v24M1404.5 740v27M1405.5 740v5M1406.5 740v2M1407.5 740v14M1408.5 740v2M1411.5 740v20M1412.5 740v50M1414.5 740v5M1416.5 740v9M1417.5 740v1M1418.5 740v22M1420.5 740v8M1422.5 740v11M1423.5 740v4M1425.5 740v8M1426.5 740v1M1429.5 740v4M1431.5 740v35M1432.5 740v16M1433.5 740v11M1434.5 740v4M1435.5 740v13M1436.5 740v8M1437.5 740v6M1438.5 740v5M1439.5 740v4M1440.5 740v3M1441.5 740v7M1442.5 740v3M1443.5 740v5M1444.5 740v5M1446.5 740v35M1447.5 740v22M1448.5 740v25M1451.5 740v3M1452.5 740v3M1453.5 740v2M1454.5 740v3M1455.5 740v23M1457.5 740v15M1458.5 740v5M1459.5 740v1M1460.5 740v10M1461.5 740v54M1462.5 740v10M1463.5 740v14M1465.5 740v2M1466.5 740v10M1467.5 740v5M1468.5 740v16M1469.5 740v35M1470.5 740v4M1472.5 740v12M1473.5 740v4M1478.5 740v27M1480.5 740v8M1481.5 740v71M1482.5 740v25M1483.5 740v2M1484.5 740v2M1485.5 740v31M1488.5 740v49M1489.5 740v12M1491.5 740v22M1492.5 740v168M1493.5 740v8M1494.5 740v10M1495.5 740v6M1496.5 740v46M1497.5 740v77M1499.5 740v5M1501.5 740v3M1502.5 740v49M1503.5 740v2M1504.5 740v27M1505.5 740v7M1507.5 740v4M1508.5 740v4M1509.5 740v5M1511.5 740v11M1513.5 740v121M1516.5 740v11M1517.5 740v52M1518.5 740v52M1519.5 740v77M1520.5 740v10M1521.5 740v77M1522.5 740v4M1523.5 740v60M1524.5 740v7M1526.5 740v63M1527.5 740v10M1528.5 740v19M1529.5 740v77M1530.5 740v115M1531.5 740v21M1532.5 740v95M1533.5 740v29M1534.5 740v27M1535.5 740v7M1536.5 740v15M1537.5 740v55M1539.5 740v18M1540.5 740v7M1541.5 740v15M1542.5 740v47M1543.5 740v41M1545.5 740v38M1547.5 740v10M1548.5 740v3M1549.5 740v5M1550.5 740v1M1551.5 740v2M1552.5 740v6M1553.5 740v2M1555.5 740v8M1556.5 740v8M1557.5 740v17M1558.5 740v14M1559.5 740v20M1560.5 740v17M1561.5 740v8M1562.5 740v22M1563.5 740v10M1564.5 740v11M1565.5 740v12M1566.5 740v18M1568.5 740v23M1570.5 740v49M1573.5 740v52M1574.5 740v9M1575.5 740v32M1576.5 740v12M1577.5 740v6M1579.5 740v9M1580.5 740v31M1583.5 740v11M1584.5 740v8M1585.5 740v13M1586.5 740v12M1587.5 740v6M1588.5 740v25M1589.5 740v10M1590.5 740v16M1591.5 740v2M1592.5 740v13M1593.5 740v18M1594.5 740v3M1596.5 740v46M1599.5 740v2M1600.5 740v6M1601.5 740v7M1602.5 740v7M1603.5 740v51M1604.5 740v16M1605.5 740v2M1606.5 740v45M1608.5 740v51M1610.5 740v41M1611.5 740v31M1614.5 740v29M1615.5 740v1M1616.5 740v44M1617.5 740v10M1620.5 740v24M1622.5 740v3M1623.5 740v14M1625.5 740v25M1627.5 740v2M1629.5 740v9M1630.5 740v4M1632.5 740v1M1633.5 740v11M1634.5 740v3M1635.5 740v10M1637.5 740v19M1640.5 740v6M1641.5 740v1M1642.5 740v2M1643.5 740v3M1645.5 740v40M1646.5 740v9M1647.5 740v13M1648.5 740v23M1649.5 740v37M1651.5 740v3M1652.5 740v17M1653.5 740v20M1654.5 740v19M1655.5 740v10M1656.5 740v19M1658.5 740v4M1659.5 740v16M1660.5 740v14M1661.5 740v2M1662.5 740v12M1665.5 740v8M1666.5 740v23M1668.5 740v14M1669.5 740v1M1671.5 740v6M1672.5 740v12M1673.5 740v38M1674.5 740v35M1675.5 740v3M1677.5 740v4M1678.5 740v24M1679.5 740v7M1680.5 740v2M1681.5 740v6M1682.5 740v10M1683.5 740v6M1684.5 740v15M1685.5 740v27M1687.5 740v27M1688.5 740v11M1689.5 740v17M1690.5 740v5M1691.5 740v13M1692.5 740v40M1694.5 740v22M1697.5 740v3M1698.5 740v43M1699.5 740v39M1700.5 740v35M1701.5 740v6M1703.5 740v4M1704.5 740v6M1705.5 740v4M1706.5 740v6M1707.5 740v4M1708.5 740v4M1709.5 740v1M1710.5 740v25M1712.5 740v6M1713.5 740v10M1714.5 740v14M1715.5 740v5M1716.5 740v3M1717.5 740v10M1718.5 740v32M1719.5 740v7M1720.5 740v5M1721.5 740v14M1722.5 740v13M1723.5 740v12M1724.5 740v2M1725.5 740v4M1726.5 740v16M1728.5 740v67M1730.5 740v5M1731.5 740v40" stroke="#e04848" stroke-width="1" fill="none"/><path d="M491 739.5H1845" stroke="#3434e0" stroke-width="1"/><path d="M1845 924.5h2M1845 904.5h4M1845 883.5h2M1845 862.5h4M1845 842.5h2M1845 821.5h4M1845 800.5h2M1845 780.5h4M1845 759.5h2M1845 739.5h4M1845 718.5h2M1845 697.5h4M1845 677.5h2M1845 656.5h4M1845 635.5h2M1845 615.5h4M1845 594.5h2M1845 574.5h4M1845 553.5h2M510.5 941v4M647.5 941v4M785.5 941v4M922.5 941v4M1059.5 941v4M1195.5 941v4M1330.5 941v4M1467.5 941v4M1603.5 941v4M1740.5 941v4" stroke="#5c7480" stroke-width="1" fill="none"/><path d="M1844.5 533V941M491 940.5H1845" stroke="#5c7480" stroke-width="1" fill="none"/></svg>




















<svg style="left:0;top:0" width="1918" height="970">
<defs>
<radialGradient id="ring" cx="239.8" cy="853.8" r="101" gradientUnits="userSpaceOnUse">
<stop offset="0.785" stop-color="#1a6db2"/><stop offset="0.80" stop-color="#2583c8"/><stop offset="0.815" stop-color="#52aede"/><stop offset="0.90" stop-color="#3f9fd8"/><stop offset="0.975" stop-color="#2788cf"/><stop offset="0.99" stop-color="#1f7bc3"/><stop offset="1" stop-color="#1a6fb6"/></radialGradient>
<linearGradient id="face" x1="0" y1="773" x2="0" y2="935" gradientUnits="userSpaceOnUse"><stop offset="0" stop-color="#fff"/><stop offset=".7" stop-color="#fff"/><stop offset="1" stop-color="#e4e8ea"/></linearGradient>
<linearGradient id="redg" x1="160" y1="0" x2="215" y2="0" gradientUnits="userSpaceOnUse"><stop offset="0" stop-color="#f23a3a"/><stop offset=".3" stop-color="#ff6e6e"/><stop offset=".6" stop-color="#ff4646"/><stop offset="1" stop-color="#f03a3a"/></linearGradient>
<linearGradient id="redh" x1="145" y1="903" x2="180" y2="934" gradientUnits="userSpaceOnUse"><stop offset="0" stop-color="#f53f3f"/><stop offset=".45" stop-color="#ff6b6b"/><stop offset=".8" stop-color="#f03c3c"/><stop offset="1" stop-color="#c92a2a"/></linearGradient>
<linearGradient id="grng" x1="268" y1="0" x2="322" y2="0" gradientUnits="userSpaceOnUse"><stop offset="0" stop-color="#12b812"/><stop offset=".55" stop-color="#1fca1f"/><stop offset=".8" stop-color="#4fe04f"/><stop offset="1" stop-color="#18b818"/></linearGradient>
<linearGradient id="grnh" x1="0" y1="875" x2="0" y2="906" gradientUnits="userSpaceOnUse"><stop offset="0" stop-color="#7af07a"/><stop offset=".5" stop-color="#3ed83e"/><stop offset=".9" stop-color="#16c016"/><stop offset=".91" stop-color="#0d8f0d"/><stop offset="1" stop-color="#0d8f0d"/></linearGradient>
</defs>
<circle cx="239.8" cy="853.8" r="101" fill="url(#ring)"/>
<circle cx="239.8" cy="853.8" r="79.6" fill="url(#face)"/>
<path d="M239.8 853.8L185.6 822.5A62.6 62.6 0 0 1 294.0 822.5Z" fill="#dce1e3"/>
<path d="M178.8 817.9A70.8 70.8 0 0 1 299.4 815.6" fill="none" stroke="#97a4ac" stroke-width="6"/>
<path d="M301.5 823.2L308.0 812.0L290.7 817.1Z" fill="#97a4ac"/>
<text x="239.4" y="828.2" text-anchor="middle" font-family="Liberation Sans,Arial,sans-serif" font-size="41" fill="#98a5ad" stroke="#98a5ad" stroke-width=".35" textLength="41" lengthAdjust="spacingAndGlyphs">24</text>
<path d="M201.8 831.3L239.8 853.8L291.9 823.5" fill="none" stroke="#8f9ca4" stroke-width="6.4" stroke-linecap="round" stroke-linejoin="round"/>
<circle cx="239.8" cy="853.8" r="8.6" fill="#fff" stroke="#8f9ca4" stroke-width="5"/>
<circle cx="169.1" cy="853.8" r="4" fill="#9aa6ad"/><circle cx="310.4" cy="853.8" r="4" fill="#9aa6ad"/>
<rect x="169.5" y="871.5" width="145.0" height="68.2" fill="#234" opacity=".22"/>
<rect x="168.5" y="870.0" width="145.0" height="68.2" fill="#fff" stroke="#6d8490" stroke-width=".8"/>
<clipPath id="rc"><path d="M213.8 868C209.5 866 205 864.4 200.3 863.4C196.3 862.5 192.3 862 188.3 862C184.2 862.2 180.4 863.3 177.1 865.2C173.2 867.6 170.2 871.2 167.8 875.4C165.5 879.2 163.6 883.2 162.3 887.5C160.9 892.4 160.4 897.5 160.4 902.8L145.1 902.8L168.3 933.9L190.9 902.3L176.7 902.3C176.6 899.5 176.6 896.8 176.9 894C177.1 891.1 177.4 888.3 178.1 885.6C178.7 883 179.5 880.4 180.8 878.2C182.6 874.9 185.1 872.2 188.3 870.8C192 869.1 196.2 868.5 200.3 868.9C204.9 869.3 209.4 870.3 213.8 871.7Z"/></clipPath><clipPath id="gc"><path d="M268.1 937.5C276 938 281 938 285.7 937C289 936.3 292 935.3 294 934.2C297 932 299 930 300.5 927.7C302.5 924.5 303.7 921 304.2 917.5C304.8 913 305.2 909 305.2 906.5L290.8 906.5L290.8 903.6L314 874.8L337.2 903.6L337.2 906.5L321.9 906.5C321.9 909.5 321.3 913.5 320.5 917.5C319.7 921.7 318.3 925.7 316.3 929.6C314.5 933.3 312 936.8 308.9 939.8C305.5 942.8 301.5 944.8 296.8 945.8C293 946.5 289.3 946.6 285.7 946.3C279.6 945.6 273.7 943.7 268.1 940.7Z"/></clipPath>
<path d="M213.8 868C209.5 866 205 864.4 200.3 863.4C196.3 862.5 192.3 862 188.3 862C184.2 862.2 180.4 863.3 177.1 865.2C173.2 867.6 170.2 871.2 167.8 875.4C165.5 879.2 163.6 883.2 162.3 887.5C160.9 892.4 160.4 897.5 160.4 902.8L145.1 902.8L168.3 933.9L190.9 902.3L176.7 902.3C176.6 899.5 176.6 896.8 176.9 894C177.1 891.1 177.4 888.3 178.1 885.6C178.7 883 179.5 880.4 180.8 878.2C182.6 874.9 185.1 872.2 188.3 870.8C192 869.1 196.2 868.5 200.3 868.9C204.9 869.3 209.4 870.3 213.8 871.7Z" fill="#a92222"/>
<g clip-path="url(#rc)"><path d="M213.8 868C209.5 866 205 864.4 200.3 863.4C196.3 862.5 192.3 862 188.3 862C184.2 862.2 180.4 863.3 177.1 865.2C173.2 867.6 170.2 871.2 167.8 875.4C165.5 879.2 163.6 883.2 162.3 887.5C160.9 892.4 160.4 897.5 160.4 902.8L145.1 902.8L168.3 933.9L190.9 902.3L176.7 902.3C176.6 899.5 176.6 896.8 176.9 894C177.1 891.1 177.4 888.3 178.1 885.6C178.7 883 179.5 880.4 180.8 878.2C182.6 874.9 185.1 872.2 188.3 870.8C192 869.1 196.2 868.5 200.3 868.9C204.9 869.3 209.4 870.3 213.8 871.7Z" fill="url(#redg)" transform="translate(-1.2,-2.8)"/><path d="M140 900L196 900L168 938Z" fill="url(#redh)" transform="translate(-1.2,-2.6)" opacity=".0"/></g>
<path d="M268.1 937.5C276 938 281 938 285.7 937C289 936.3 292 935.3 294 934.2C297 932 299 930 300.5 927.7C302.5 924.5 303.7 921 304.2 917.5C304.8 913 305.2 909 305.2 906.5L290.8 906.5L290.8 903.6L314 874.8L337.2 903.6L337.2 906.5L321.9 906.5C321.9 909.5 321.3 913.5 320.5 917.5C319.7 921.7 318.3 925.7 316.3 929.6C314.5 933.3 312 936.8 308.9 939.8C305.5 942.8 301.5 944.8 296.8 945.8C293 946.5 289.3 946.6 285.7 946.3C279.6 945.6 273.7 943.7 268.1 940.7Z" fill="#0b8a0b"/>
<g clip-path="url(#gc)"><path d="M268.1 937.5C276 938 281 938 285.7 937C289 936.3 292 935.3 294 934.2C297 932 299 930 300.5 927.7C302.5 924.5 303.7 921 304.2 917.5C304.8 913 305.2 909 305.2 906.5L290.8 906.5L290.8 903.6L314 874.8L337.2 903.6L337.2 906.5L321.9 906.5C321.9 909.5 321.3 913.5 320.5 917.5C319.7 921.7 318.3 925.7 316.3 929.6C314.5 933.3 312 936.8 308.9 939.8C305.5 942.8 301.5 944.8 296.8 945.8C293 946.5 289.3 946.6 285.7 946.3C279.6 945.6 273.7 943.7 268.1 940.7Z" fill="url(#grng)" transform="translate(-0.8,-2.9)"/></g>
<path d="M146.5 903.4L189 903L177 919C168 914 158 909 146.5 903.4Z" fill="#ff8a8a" opacity=".35"/>
<path d="M314 876.5L335 902.5C327 897 316 891.5 300 890.5Z" fill="#9cf59c" opacity=".45"/>
</svg>

<svg style="left:0;top:0" width="1918" height="970" font-family="Liberation Sans,Arial,sans-serif"><text x="539.7" y="70" font-size="16.5" fill="#0a980a" text-anchor="middle">£13,401.50</text><text x="239.3" y="203" font-size="22.2" fill="#0a980a" text-anchor="middle">41.46%</text><text x="780" y="193" font-size="22.2" fill="#0a980a" text-anchor="middle">1.17</text><text x="256.2" y="339" font-size="25.3" fill="#000" text-anchor="end" letter-spacing="0.4">Total:</text><text x="261.2" y="339" font-size="25.3" fill="#000" text-anchor="start">3,092</text><text x="256.2" y="369" font-size="25.3" fill="#0a980a" text-anchor="end" letter-spacing="0.15">Winning:</text><text x="261.2" y="369" font-size="25.3" fill="#0a980a" text-anchor="start">1,282</text><text x="256.2" y="399" font-size="25.3" fill="#000" text-anchor="end" letter-spacing="0.15">Neutral:</text><text x="261.2" y="399" font-size="25.3" fill="#000" text-anchor="start">1</text><text x="256.2" y="429" font-size="25.3" fill="#a80c0c" text-anchor="end" letter-spacing="0.15">Losing:</text><text x="261.2" y="429" font-size="25.3" fill="#a80c0c" text-anchor="start">1,809</text><text x="240" y="506" font-size="34" fill="#a80c0c" text-anchor="middle">-£1,948.20</text><text x="239.6" y="712" font-size="22" fill="#000" text-anchor="middle">55.03%</text><text x="779.7" y="310" font-size="16.5" fill="#0a980a" text-anchor="middle">£90,451.40</text><text x="779" y="404" font-size="50.5" fill="#b01010" text-anchor="middle">-£77,049.90</text><text x="779.7" y="487" font-size="34.3" fill="#0a980a" text-anchor="middle">£14,152.30</text><text x="1170" y="74.4" font-size="21.5"><tspan fill="#0a980a">£4.33</tspan> per trade</text><text x="1159" y="100" font-size="11" fill="#0a980a" text-anchor="start">Gain of best trade: £912.50</text><text x="1205.5" y="296" font-size="11" fill="#0a980a" text-anchor="end">Average</text><text x="1205.5" y="312" font-size="11" fill="#0a980a" text-anchor="end">£70.55</text><text x="1278" y="322" font-size="11" fill="#a80c0c" text-anchor="start">Average</text><text x="1278" y="338" font-size="11" fill="#a80c0c" text-anchor="start">-£42.59</text><text x="1185" y="490" font-size="11" fill="#a80c0c" text-anchor="start" letter-spacing="0.125">Loss of worst trade: -£702.50</text><text x="1489.7" y="120" font-size="67.5" fill="#000" text-anchor="middle">0.16</text><text x="1489" y="235.7" font-size="56" fill="#000" text-anchor="middle">0.03%</text><text x="1488.8" y="355.6" font-size="56" fill="#000" text-anchor="middle">9.91%</text><text x="1493.3" y="463" font-size="23" fill="#000" text-anchor="middle">(70.77%) -1.05</text><text x="1620" y="132" font-size="11" fill="#000" text-anchor="middle">Mon</text><text x="1660" y="132" font-size="11" fill="#000" text-anchor="middle">Tue</text><text x="1700" y="132" font-size="11" fill="#000" text-anchor="middle">Wed</text><text x="1740" y="132" font-size="11" fill="#000" text-anchor="middle">Thu</text><text x="1780" y="132" font-size="11" fill="#000" text-anchor="middle">Fri</text><text x="1820" y="132" font-size="11" fill="#000" text-anchor="middle">Sat</text><text x="1860" y="132" font-size="11" fill="#000" text-anchor="middle">Sun</text><text x="1620" y="115" font-size="11" fill="#000" text-anchor="middle">-£1,529.50</text><text x="1660" y="75" font-size="11" fill="#000" text-anchor="middle">£4,036.40</text><text x="1740" y="113" font-size="11" fill="#000" text-anchor="middle">-£1,078.70</text><text x="1780" y="70" font-size="11" fill="#000" text-anchor="middle">£5,239.90</text><text x="1851" y="908" font-size="11" fill="#000" text-anchor="start">-800</text><text x="1851" y="866" font-size="11" fill="#000" text-anchor="start">-600</text><text x="1851" y="825" font-size="11" fill="#000" text-anchor="start">-400</text><text x="1851" y="784" font-size="11" fill="#000" text-anchor="start">-200</text><text x="1851" y="743" font-size="11" fill="#000" text-anchor="start">0</text><text x="1851" y="701" font-size="11" fill="#000" text-anchor="start">200</text><text x="1851" y="660" font-size="11" fill="#000" text-anchor="start">400</text><text x="1851" y="619" font-size="11" fill="#000" text-anchor="start">600</text><text x="1851" y="578" font-size="11" fill="#000" text-anchor="start">800</text><text x="510.5" y="955.5" font-size="11" fill="#000" text-anchor="middle">2013</text><text x="647.5" y="955.5" font-size="11" fill="#000" text-anchor="middle">2014</text><text x="785.5" y="955.5" font-size="11" fill="#000" text-anchor="middle">2015</text><text x="922.5" y="955.5" font-size="11" fill="#000" text-anchor="middle">2016</text><text x="1059.5" y="955.5" font-size="11" fill="#000" text-anchor="middle">2017</text><text x="1195.5" y="955.5" font-size="11" fill="#000" text-anchor="middle">2018</text><text x="1330.5" y="955.5" font-size="11" fill="#000" text-anchor="middle">2019</text><text x="1467.5" y="955.5" font-size="11" fill="#000" text-anchor="middle">2020</text><text x="1603.5" y="955.5" font-size="11" fill="#000" text-anchor="middle">2021</text><text x="1740.5" y="955.5" font-size="11" fill="#000" text-anchor="middle">2022</text><text x="492" y="938" font-size="10.75" fill="#8c8c8c" text-anchor="start">© IT-Finance.com</text><text x="239.9" y="918.6" font-size="41.4" fill="#000" text-anchor="middle">2.88</text></svg>
<div class="p" style="left:1849px;top:719px;width:26px;height:17px;box-sizing:border-box;border:1px solid #6b8796;background:linear-gradient(#ffec20,#f5c200);font-size:11px;line-height:15px;text-align:center">50.8</div>
</body></html>
